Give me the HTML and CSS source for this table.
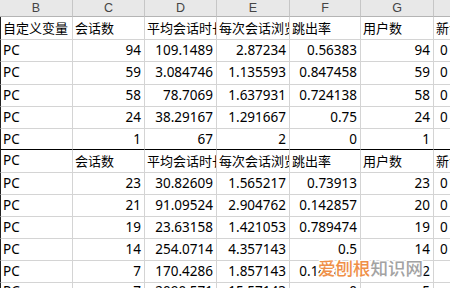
FILE: index.html
```html
<!DOCTYPE html>
<html>
<head>
<meta charset="utf-8">
<link rel="stylesheet" href="styles.css">
</head>
<body>
<div class="sheet">
  <div class="row head">
    <div class="c">B</div><div class="c">C</div><div class="c">D</div><div class="c">E</div><div class="c">F</div><div class="c">G</div><div class="c">H</div>
  </div>
  <div class="row r23">
    <div class="c l t">自定义变量</div><div class="c t">会话数</div><div class="c t">平均会话时长</div><div class="c t">每次会话浏览页数</div><div class="c t">跳出率</div><div class="c t">用户数</div><div class="c t">新会话百分比</div>
  </div>
  <div class="row">
    <div class="c l">PC</div><div class="c n">94</div><div class="c n">109.1489</div><div class="c n">2.87234</div><div class="c n">0.56383</div><div class="c n">94</div><div class="c h">0</div>
  </div>
  <div class="row r23">
    <div class="c l">PC</div><div class="c n">59</div><div class="c n">3.084746</div><div class="c n">1.135593</div><div class="c n">0.847458</div><div class="c n">59</div><div class="c h">0</div>
  </div>
  <div class="row">
    <div class="c l">PC</div><div class="c n">58</div><div class="c n">78.7069</div><div class="c n">1.637931</div><div class="c n">0.724138</div><div class="c n">58</div><div class="c h">0</div>
  </div>
  <div class="row">
    <div class="c l">PC</div><div class="c n">24</div><div class="c n">38.29167</div><div class="c n">1.291667</div><div class="c n">0.75</div><div class="c n">24</div><div class="c h">0</div>
  </div>
  <div class="row r21 sep">
    <div class="c l">PC</div><div class="c n">1</div><div class="c n">67</div><div class="c n">2</div><div class="c n">0</div><div class="c n">1</div><div class="c h"></div>
  </div>
  <div class="row r23">
    <div class="c l">PC</div><div class="c t">会话数</div><div class="c t">平均会话时长</div><div class="c t">每次会话浏览页数</div><div class="c t">跳出率</div><div class="c t">用户数</div><div class="c t">新会话百分比</div>
  </div>
  <div class="row">
    <div class="c l">PC</div><div class="c n">23</div><div class="c n">30.82609</div><div class="c n">1.565217</div><div class="c n">0.73913</div><div class="c n">23</div><div class="c h">0</div>
  </div>
  <div class="row">
    <div class="c l">PC</div><div class="c n">21</div><div class="c n">91.09524</div><div class="c n">2.904762</div><div class="c n">0.142857</div><div class="c n">20</div><div class="c h">0</div>
  </div>
  <div class="row">
    <div class="c l">PC</div><div class="c n">19</div><div class="c n">23.63158</div><div class="c n">1.421053</div><div class="c n">0.789474</div><div class="c n">19</div><div class="c h">0</div>
  </div>
  <div class="row">
    <div class="c l">PC</div><div class="c n">14</div><div class="c n">254.0714</div><div class="c n">4.357143</div><div class="c n">0.5</div><div class="c n">14</div><div class="c h">0</div>
  </div>
  <div class="row">
    <div class="c l">PC</div><div class="c n">7</div><div class="c n">170.4286</div><div class="c n">1.857143</div><div class="c n">0.142857</div><div class="c n">2</div><div class="c h"></div>
  </div>
  <div class="row last">
    <div class="c l">PC</div><div class="c n">7</div><div class="c n">2090.571</div><div class="c n">15.57143</div><div class="c n">0</div><div class="c n">5</div><div class="c h"></div>
  </div>
  <div class="wm"><span class="wm-a">爱刨根</span><span class="wm-b">知识网</span></div>
</div>
</body>
</html>
```
FILE: styles.css
```css
html, body {
  margin: 0;
  padding: 0;
  background: #fff;
  overflow: hidden;
}
.sheet {
  position: relative;
  width: 450px;
  height: 288px;
  overflow: hidden;
  display: flex;
  flex-direction: column;
  font-family: "Noto Sans", "Noto Sans CJK SC", sans-serif;
  font-size: 13.5px;
  color: #000;
}
.row {
  display: grid;
  grid-template-columns: 73px 72px 72px 73px 71px 73px 88px;
  height: 22px;
  flex: none;
}
.row.r23 { height: 23px; }
.row.r21 { height: 21px; }
.c {
  box-sizing: border-box;
  border-right: 1px solid #d4d4d4;
  border-bottom: 1px solid #d4d4d4;
  padding: 0 3px 0 3px;
  overflow: hidden;
  white-space: nowrap;
  line-height: 21px;
  display: block;
}
.c.l {
  border-left: 1px solid #222;
  padding-left: 2px;
}
.c.n { text-align: right; }
.c.h { padding-left: 6px; }
.c.t {
  font-family: "Noto Sans CJK SC", sans-serif;
  font-size: 13px;
  padding-left: 2px;
}
.row.last .c { line-height: 17px; }
.row.sep .c { border-bottom-color: #000; }
.head {
  height: 17px;
  background: #e8e8e8;
}
.head .c {
  font-family: "Liberation Sans", sans-serif;
  font-size: 12.5px;
  color: #444;
  text-align: center;
  line-height: 16px;
  border-right-color: #c6c6c6;
  border-bottom-color: #b4b4b4;
}
.wm {
  position: absolute;
  left: 318px;
  top: 257px;
  font-family: "Noto Sans CJK SC", sans-serif;
  font-size: 17.5px;
  font-weight: 500;
  line-height: 22px;
  white-space: nowrap;
  text-shadow: 1px 0 0 #fff, -1px 0 0 #fff, 0 1px 0 #fff, 0 -1px 0 #fff, 1px 1px 0 #fff, -1px -1px 0 #fff, 1px -1px 0 #fff, -1px 1px 0 #fff, 2px 0 1px #fff, -2px 0 1px #fff;
}
.wm-a { color: #ef9048; }
.wm-b { color: #a3a3a3; }
```
